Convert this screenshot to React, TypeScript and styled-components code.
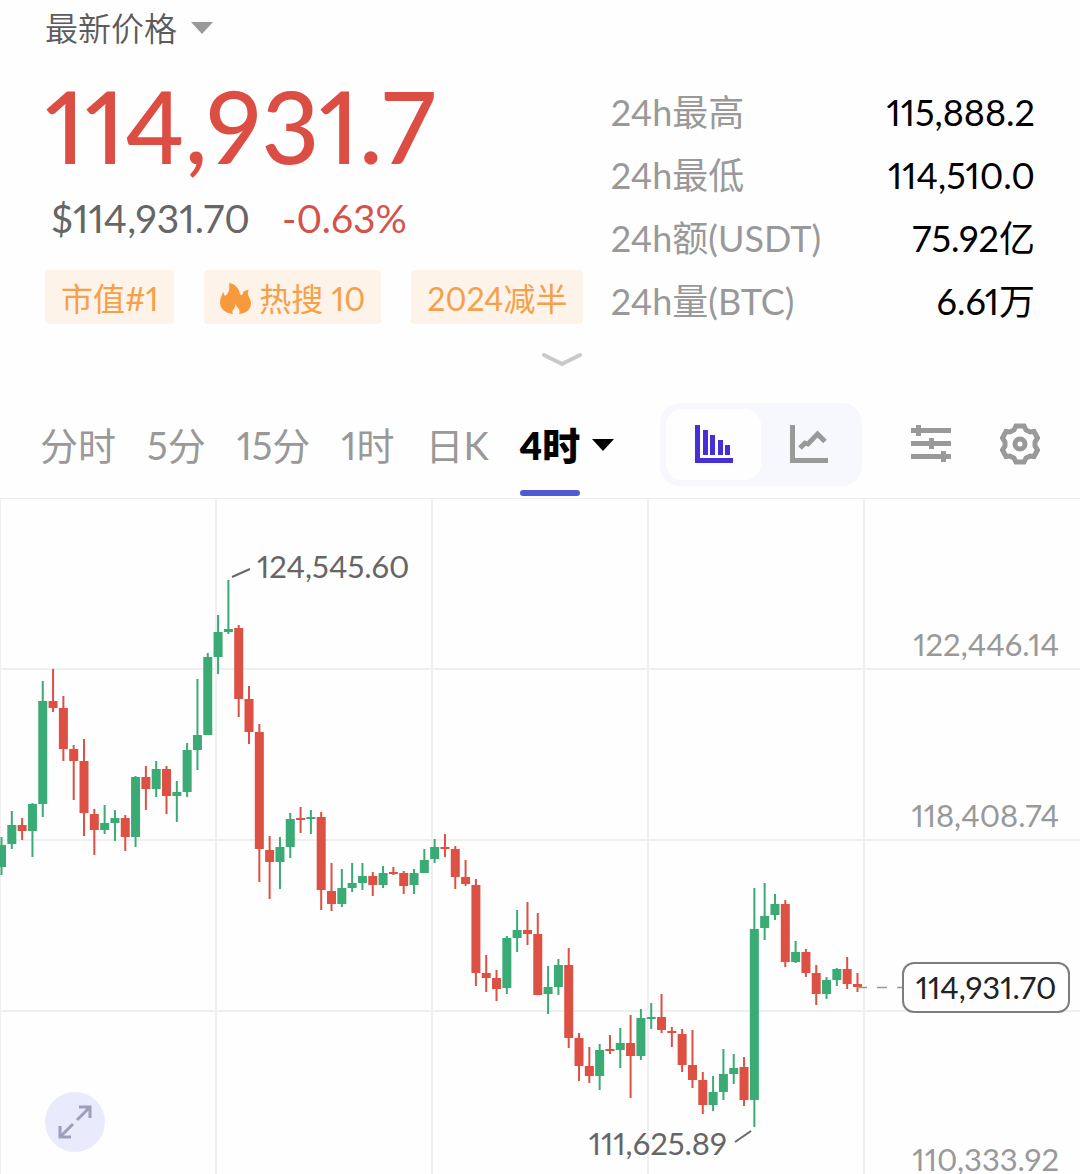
import React, { useState } from "react";
import styled, { createGlobalStyle } from "styled-components";

const GlobalStyle = createGlobalStyle`
  * { box-sizing: border-box; }
  body {
    margin: 0;
    background: #fefefe;
    font-family: Lato, "Noto Sans CJK SC", sans-serif;
    font-variant-numeric: proportional-nums;
    color: #000;
  }
  button {
    margin: 0;
    padding: 0;
    border: 0;
    background: none;
    font: inherit;
    font-variant-numeric: inherit;
    color: inherit;
    cursor: pointer;
  }
`;

const Page = styled.main`
  overflow: hidden;
`;

const PriceType = styled.button`
  display: flex;
  align-items: center;
  gap: 14px;
  height: 56px;
  margin-left: 45px;
  font-size: 33px;
  font-weight: 350;
  line-height: 48px;
  color: #5c5c5c;
`;

const Summary = styled.section`
  display: grid;
  grid-template-columns: 4fr 3fr;
  padding: 0 45px;
  margin-top: 26px;
`;

const Quote = styled.div`
  white-space: nowrap;
`;

const LastPrice = styled.h1`
  margin: 0;
  font-size: 100px;
  font-weight: 500;
  line-height: 86px;
  color: #dc4d43;
`;

const SubPrice = styled.div`
  display: flex;
  gap: 32px;
  margin-top: 26px;
  padding-left: 6px;
  font-size: 39px;
  line-height: 48px;
  color: #666;
`;

const Change = styled.span`
  color: #d5524b;
`;

const Tags = styled.ul`
  display: flex;
  gap: 30px;
  margin: 28px 0 0;
  padding: 0;
  list-style: none;
`;

const Tag = styled.li`
  display: flex;
  align-items: center;
  gap: 8px;
  height: 54px;
  padding: 3px 16px 0;
  border-radius: 4px;
  background: #fef3e8;
  font-size: 32px;
  line-height: 48px;
  color: #f5a04a;
`;

const Stats = styled.dl`
  margin: 0;
`;

const Stat = styled.div`
  display: flex;
  align-items: flex-start;
  justify-content: space-between;
  height: 63px;
  font-size: 36px;
  line-height: 60px;
  white-space: nowrap;
`;

const StatName = styled.dt`
  color: #999;
`;

const StatValue = styled.dd`
  margin: 0;
`;

const Expander = styled.button`
  display: flex;
  align-items: center;
  justify-content: center;
  width: 100%;
  height: 50px;
  padding-left: 44px;
`;

const Toolbar = styled.div`
  display: flex;
  align-items: center;
  justify-content: space-between;
  height: 109px;
  margin-top: 6px;
  padding: 0 40px;
  border-bottom: 1px solid #eceded;
`;

const Periods = styled.div`
  display: flex;
  gap: 31px;
  height: 100%;
`;

const Period = styled.button<{ $active?: boolean }>`
  display: flex;
  align-items: center;
  gap: 12px;
  padding-top: 2px;
  font-size: 38px;
  line-height: 48px;
  font-weight: ${(p) => (p.$active ? 800 : 400)};
  color: ${(p) => (p.$active ? "#000" : "#999")};
  white-space: nowrap;
`;

const PeriodName = styled.span<{ $active?: boolean }>`
  position: relative;
  display: flex;
  align-items: center;
  height: 100%;

  &::after {
    content: "";
    position: absolute;
    left: 0;
    right: 0;
    bottom: 2px;
    height: 6px;
    border-radius: 3px;
    background: ${(p) => (p.$active ? "#4f5bd5" : "transparent")};
  }
`;

const Tools = styled.div`
  display: flex;
  align-items: center;
  gap: 49px;
`;

const Switcher = styled.div`
  display: flex;
  padding: 6px;
  border-radius: 20px;
  background: #f7f8fd;
`;

const SwitchButton = styled.button<{ $active: boolean }>`
  display: flex;
  align-items: center;
  justify-content: center;
  width: 95px;
  height: 71px;
  border-radius: 16px;
  background: ${(p) => (p.$active ? "#fefefe" : "transparent")};
  color: ${(p) => (p.$active ? "#452fd6" : "#999")};
`;

const ToolButton = styled.button`
  display: flex;
  color: #999;
`;

const ChartArea = styled.section`
  position: relative;
`;

const ChartSvg = styled.svg`
  display: block;
  width: 100%;
  height: auto;
`;

const ChartText = styled.text<{ $tone: string }>`
  font-size: 31px;
  fill: ${(p) => p.$tone};
`;

const FullscreenButton = styled.button`
  position: absolute;
  left: 45px;
  bottom: 22px;
  display: flex;
  align-items: center;
  justify-content: center;
  width: 60px;
  height: 60px;
  border-radius: 50%;
  background: #e9ebfc;
  color: #9c9fb9;
`;

const stats = [
  ["24h最高", "115,888.2"],
  ["24h最低", "114,510.0"],
  ["24h额(USDT)", "75.92亿"],
  ["24h量(BTC)", "6.61万"],
];

const periods = ["分时", "5分", "15分", "1时", "日K", "4时"];

// direction, high, low, body top, body bottom
type Candle = ["u" | "d", number, number, number, number];

const candles: Candle[] = [
  ["u", 837, 875, 845, 867], ["u", 811, 849, 825, 844], ["d", 818, 840, 825, 831],
  ["u", 803, 857, 804, 831], ["u", 681, 817, 701, 804], ["d", 669, 712, 701, 708],
  ["d", 696, 761, 708, 749], ["d", 745, 800, 749, 761], ["d", 739, 836, 761, 813],
  ["d", 809, 855, 814, 830], ["u", 805, 834, 823, 830], ["u", 810, 841, 818, 823],
  ["d", 815, 851, 818, 837], ["u", 776, 847, 777, 837], ["d", 766, 810, 777, 789],
  ["u", 761, 797, 769, 789], ["d", 766, 814, 769, 796], ["u", 781, 822, 792, 796],
  ["u", 743, 797, 750, 792], ["u", 679, 770, 735, 750], ["u", 653, 735, 657, 735],
  ["u", 615, 674, 632, 657], ["u", 580, 634, 629, 632], ["d", 625, 717, 628, 699],
  ["d", 686, 744, 699, 732], ["d", 724, 882, 732, 849], ["d", 836, 899, 850, 862],
  ["u", 837, 889, 847, 862], ["u", 813, 858, 819, 847], ["d", 807, 833, 818, 820],
  ["u", 810, 834, 817, 819], ["d", 812, 910, 817, 890], ["d", 863, 911, 891, 904],
  ["u", 869, 907, 888, 904], ["u", 863, 892, 883, 888], ["u", 863, 890, 876, 883],
  ["d", 872, 896, 876, 885], ["u", 866, 888, 873, 885], ["d", 867, 875, 872, 874],
  ["d", 871, 894, 873, 886], ["u", 869, 894, 873, 885], ["u", 849, 873, 860, 873],
  ["u", 839, 863, 847, 859], ["d", 834, 857, 847, 849], ["d", 846, 889, 849, 877],
  ["d", 860, 886, 877, 884], ["d", 879, 986, 885, 973], ["d", 955, 992, 973, 978],
  ["d", 970, 1001, 978, 989], ["u", 936, 994, 938, 988], ["u", 910, 952, 930, 938],
  ["d", 902, 945, 930, 934], ["d", 913, 995, 934, 995], ["u", 966, 1014, 987, 994],
  ["u", 959, 995, 965, 987], ["d", 948, 1048, 965, 1038], ["d", 1033, 1081, 1038, 1066],
  ["d", 1047, 1083, 1066, 1076], ["u", 1044, 1090, 1050, 1076], ["d", 1035, 1054, 1049, 1051],
  ["u", 1028, 1068, 1043, 1050], ["d", 1015, 1098, 1043, 1056], ["u", 1009, 1060, 1018, 1056],
  ["u", 1003, 1029, 1017, 1019], ["d", 994, 1033, 1017, 1030], ["d", 1027, 1047, 1031, 1033],
  ["d", 1029, 1072, 1034, 1065], ["d", 1030, 1088, 1065, 1080], ["d", 1072, 1114, 1080, 1105],
  ["u", 1076, 1111, 1092, 1105], ["u", 1049, 1100, 1074, 1092], ["u", 1054, 1084, 1068, 1074],
  ["d", 1057, 1106, 1067, 1100], ["u", 888, 1127, 929, 1100], ["u", 883, 940, 916, 928],
  ["u", 894, 920, 904, 915], ["d", 900, 967, 904, 962], ["u", 941, 963, 952, 962],
  ["d", 949, 977, 952, 973], ["d", 965, 1005, 973, 994], ["u", 977, 999, 980, 994],
  ["u", 968, 986, 969, 980], ["d", 957, 989, 969, 984], ["d", 973, 992, 984, 987],
];

const FIRST_X = 1.5;
const STEP = 10.313;

function Candles() {
  return (
    <g>
      {candles.map(([dir, high, low, top, bottom], i) => {
        const x = FIRST_X + i * STEP;
        return (
          <g key={i} fill={dir === "u" ? "#3aab74" : "#dd5044"}>
            <rect x={x - 1} y={high} width={2} height={low - high} />
            <rect x={x - 4.5} y={top} width={9} height={bottom - top} />
          </g>
        );
      })}
    </g>
  );
}

function Chart() {
  return (
    <ChartSvg viewBox="0 499 1080 675" role="img" aria-label="BTC 4时 K线">
      <g stroke="#eef0f0" strokeWidth="2">
        {[0, 216, 432, 648, 864].map((x) => <line key={x} x1={x} x2={x} y1="499" y2="1174" />)}
        {[669, 840, 1011].map((y) => <line key={y} x1="0" x2="1080" y1={y} y2={y} />)}
      </g>
      <Candles />
      <line x1="857" x2="902" y1="987.5" y2="987.5" stroke="#999" strokeWidth="1.5" strokeDasharray="10 10" />
      <g stroke="#666" strokeWidth="2">
        <line x1="232" y1="577" x2="250" y2="569" />
        <line x1="735" y1="1142" x2="751" y2="1131" />
      </g>
      <ChartText $tone="#666" x="257" y="578">124,545.60</ChartText>
      <ChartText $tone="#666" x="727" y="1155" textAnchor="end">111,625.89</ChartText>
      <ChartText $tone="#999" x="1059" y="656" textAnchor="end">122,446.14</ChartText>
      <ChartText $tone="#999" x="1059" y="827" textAnchor="end">118,408.74</ChartText>
      <ChartText $tone="#999" x="1059" y="1171" textAnchor="end">110,333.92</ChartText>
      <rect x="903" y="963" width="166" height="49" rx="11" fill="#fefefe" stroke="#7d7d7d" strokeWidth="2" />
      <ChartText $tone="#222" x="986" y="999" textAnchor="middle">114,931.70</ChartText>
    </ChartSvg>
  );
}

const Caret = ({ color }: { color: string }) => (
  <svg width="22" height="12" viewBox="0 0 22 12" aria-hidden="true">
    <path d="M0 0H22L11 12Z" fill={color} />
  </svg>
);

const Flame = () => (
  <svg width="31" height="32" viewBox="0 0 31 32" aria-hidden="true">
    <path
      d="M9 0C15 1 19 5 20 11C21 13 23 12 23 10C23 8 26 7 29 7C27 9 28 11 29 14C30 16 31 18 31 20C31 26 27 30 19 31C20 29 20 27 18 25C17 24 16 23 16 21C15 22 15 24 14 26C12 28 12 29 13 31C5 30 0 26 0 19C0 15 2 13 3 9C4 10 4 12 5 13C9 11 10 5 9 0Z"
      fill="#f79a3c"
    />
  </svg>
);

const BarsIcon = () => (
  <svg width="38" height="38" viewBox="0 0 38 38" fill="currentColor" aria-hidden="true">
    <path d="M0 0H5V33H38V38H0ZM8 5H13V30H8ZM15 10H20V30H15ZM23 15H28V30H23ZM30 20H35V30H30Z" />
  </svg>
);

const LineIcon = () => (
  <svg width="38" height="38" viewBox="0 0 38 38" fill="currentColor" aria-hidden="true">
    <path d="M0 0H5V33H38V38H0Z" />
    <path d="M10 23L15 18L18 19L27.500 9L35 16.500" fill="none" stroke="currentColor" strokeWidth="5" />
  </svg>
);

const SlidersIcon = () => (
  <svg width="40" height="40" viewBox="0 0 40 40" fill="currentColor" aria-hidden="true">
    <path d="M0 4H40V9H0ZM5 1H10V12H5ZM0 17H40V22H0ZM18 14H23V25H18ZM0 30H40V35H0ZM30 27H35V38H30Z" />
  </svg>
);

const GearIcon = () => (
  <svg width="40" height="42" viewBox="0 0 40 42" fill="none" stroke="currentColor" strokeWidth="5" aria-hidden="true">
    <path d="M16 3H24L26 7L30 9L34 8.500L37.500 15L35 19V23L37.500 27L34 33.500L30 33L26 35L24 39H16L14 35L10 33L6 33.500L2.500 27L5 23V19L2.500 15L6 8.500L10 9L14 7Z" />
    <circle cx="20" cy="21" r="5" />
  </svg>
);

export default function App() {
  const [period, setPeriod] = useState("4时");
  const [view, setView] = useState("kline");

  return (
    <Page>
      <GlobalStyle />
      <PriceType type="button">
        最新价格
        <Caret color="#999" />
      </PriceType>

      <Summary>
        <Quote>
          <LastPrice>114,931.7</LastPrice>
          <SubPrice>
            <span>$114,931.70</span>
            <Change>-0.63%</Change>
          </SubPrice>
          <Tags>
            <Tag>市值#1</Tag>
            <Tag><Flame />热搜 10</Tag>
            <Tag>2024减半</Tag>
          </Tags>
        </Quote>
        <Stats>
          {stats.map(([name, value]) => (
            <Stat key={name}>
              <StatName>{name}</StatName>
              <StatValue>{value}</StatValue>
            </Stat>
          ))}
        </Stats>
      </Summary>

      <Expander type="button" aria-label="展开">
        <svg width="42" height="16" viewBox="0 0 42 16" fill="none" stroke="#c9c9c9" strokeWidth="4" strokeLinecap="round" strokeLinejoin="round" aria-hidden="true">
          <path d="M3 4L21 13L39 4" />
        </svg>
      </Expander>

      <Toolbar>
        <Periods>
          {periods.map((name) => (
            <Period key={name} type="button" $active={name === period} onClick={() => setPeriod(name)}>
              <PeriodName $active={name === period}>{name}</PeriodName>
              {name === "4时" && <Caret color="currentColor" />}
            </Period>
          ))}
        </Periods>
        <Tools>
          <Switcher>
            <SwitchButton type="button" aria-label="K线图" $active={view === "kline"} onClick={() => setView("kline")}>
              <BarsIcon />
            </SwitchButton>
            <SwitchButton type="button" aria-label="折线图" $active={view === "line"} onClick={() => setView("line")}>
              <LineIcon />
            </SwitchButton>
          </Switcher>
          <ToolButton type="button" aria-label="指标"><SlidersIcon /></ToolButton>
          <ToolButton type="button" aria-label="设置"><GearIcon /></ToolButton>
        </Tools>
      </Toolbar>

      <ChartArea>
        <Chart />
        <FullscreenButton type="button" aria-label="全屏">
          <svg width="34" height="34" viewBox="0 0 34 34" fill="none" stroke="currentColor" strokeWidth="3" aria-hidden="true">
            <path d="M19 15L32 2M21 2H32V13M15 19L2 32M2 21V32H13" />
          </svg>
        </FullscreenButton>
      </ChartArea>
    </Page>
  );
}
